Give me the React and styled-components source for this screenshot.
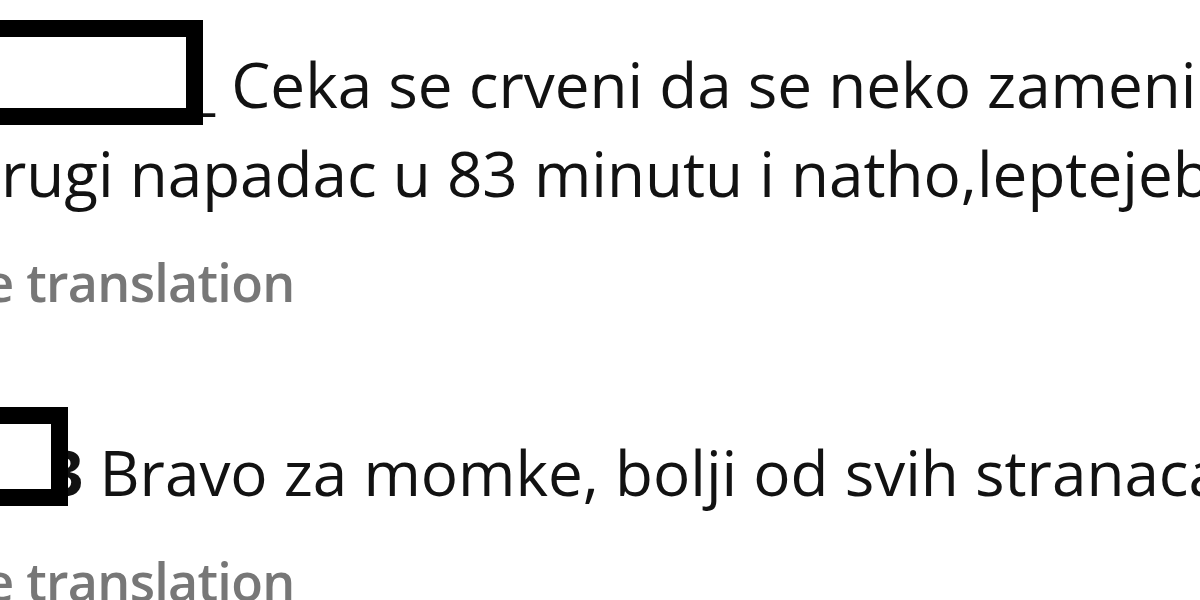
import React from "react";
import styled, { createGlobalStyle } from "styled-components";

const GlobalStyle = createGlobalStyle`
  html, body {
    margin: 0;
    padding: 0;
    background: #ffffff;
  }
  body {
    font-family: "Open Sans", "Noto Sans", "Liberation Sans", sans-serif;
  }
`;

const comments = [
  {
    id: 1,
    boxWidth: 240,
    boxHeight: 105,
    boxDrop: 17,
    tail: "_",
    tailBold: false,
    tailShift: -15,
    lines: ["Ceka se crveni da se neko zameni", "drugi napadac u 83 minutu i natho,leptejebo"],
  },
  {
    id: 2,
    boxWidth: 105,
    boxHeight: 99,
    boxDrop: 10,
    tail: "3",
    tailBold: true,
    tailShift: -20,
    lines: ["Bravo za momke, bolji od svih stranaca"],
  },
];

const App = () => {
  return (
    <>
      <GlobalStyle />
      <Page>
        <List>
          {comments.map((c) => (
            <Comment key={c.id}>
              {c.lines.map((line, i) => (
                <Line key={i}>
                  {i === 0 && (
                    <>
                      <Redacted w={c.boxWidth} h={c.boxHeight} drop={c.boxDrop} />
                      <Tail bold={c.tailBold} shift={c.tailShift}>
                        {c.tail}
                      </Tail>
                    </>
                  )}
                  {i === 0 ? " " + line : line}
                </Line>
              ))}
              <Translate>See translation</Translate>
            </Comment>
          ))}
        </List>
      </Page>
    </>
  );
};

export default App;

const Page = styled.div`
  width: 1200px;
  height: 600px;
  overflow: hidden;
  background: #ffffff;
`;

const List = styled.div`
  display: flex;
  flex-direction: column;
  gap: 81px;
  padding-top: 20px;
  margin-left: -37px;
`;

const Comment = styled.div`
  display: flex;
  flex-direction: column;
`;

const Line = styled.div`
  white-space: nowrap;
  font-size: 62px;
  line-height: 89px;
  color: #121212;
`;

// black bar hiding the commenter's name
const Redacted = styled.span`
  position: relative;
  z-index: 1;
  display: inline-block;
  box-sizing: border-box;
  width: ${(p) => p.w}px;
  height: ${(p) => p.h}px;
  border: 17px solid #000;
  background: #fff;
  vertical-align: -${(p) => p.drop}px;
`;

const Tail = styled.span`
  margin-left: ${(p) => p.shift}px;
  font-weight: ${(p) => (p.bold ? 700 : 400)};
  color: #111;
`;

const Translate = styled.div`
  white-space: nowrap;
  font-size: 52px;
  letter-spacing: -0.7px;
  line-height: 89px;
  font-weight: 600;
  color: #777777;
  margin-left: -36px;
  margin-top: 19px;
`;
